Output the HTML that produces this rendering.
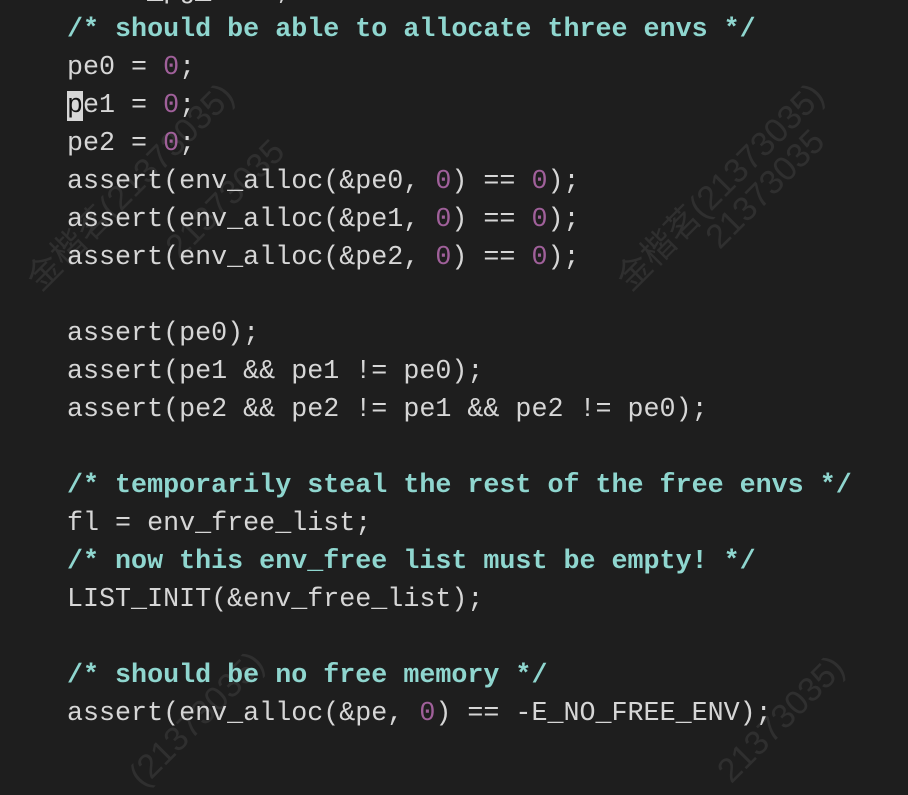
<!DOCTYPE html>
<html><head><meta charset="utf-8"><style>
html,body{margin:0;padding:0;width:908px;height:764px;overflow:hidden;background:#1e1e1e;}
pre{position:absolute;left:67px;top:-27px;margin:0;font-family:"Liberation Mono",monospace;font-size:26.7px;line-height:38px;color:#d6d6d6;}
.c{color:#8fd6cf;font-weight:600;}
.n{color:#a0609a;}
.cur{background:#d6d6d6;color:#111;}
.w{position:absolute;font-family:"Liberation Sans","Noto Sans CJK SC",sans-serif;font-size:34px;color:rgba(255,255,255,0.08);transform:rotate(-45deg);white-space:nowrap;}
</style></head><body>
<div class="w" style="left:-10px;top:160px;">金楷茗(21373035)</div>
<div class="w" style="left:150px;top:180px;">21373035</div>
<div class="w" style="left:580px;top:160px;">金楷茗(21373035)</div>
<div class="w" style="left:690px;top:170px;">21373035</div>
<div class="w" style="left:110px;top:700px;">(21373035)</div>
<div class="w" style="left:700px;top:700px;">21373035)</div>
<pre>  env_pg_free;
<span class="c">/* should be able to allocate three envs */</span>
pe0 = <span class="n">0</span>;
<span class="cur">p</span>e1 = <span class="n">0</span>;
pe2 = <span class="n">0</span>;
assert(env_alloc(&amp;pe0, <span class="n">0</span>) == <span class="n">0</span>);
assert(env_alloc(&amp;pe1, <span class="n">0</span>) == <span class="n">0</span>);
assert(env_alloc(&amp;pe2, <span class="n">0</span>) == <span class="n">0</span>);

assert(pe0);
assert(pe1 &amp;&amp; pe1 != pe0);
assert(pe2 &amp;&amp; pe2 != pe1 &amp;&amp; pe2 != pe0);

<span class="c">/* temporarily steal the rest of the free envs */</span>
fl = env_free_list;
<span class="c">/* now this env_free list must be empty! */</span>
LIST_INIT(&amp;env_free_list);

<span class="c">/* should be no free memory */</span>
assert(env_alloc(&amp;pe, <span class="n">0</span>) == -E_NO_FREE_ENV);
</pre>
</body></html>
